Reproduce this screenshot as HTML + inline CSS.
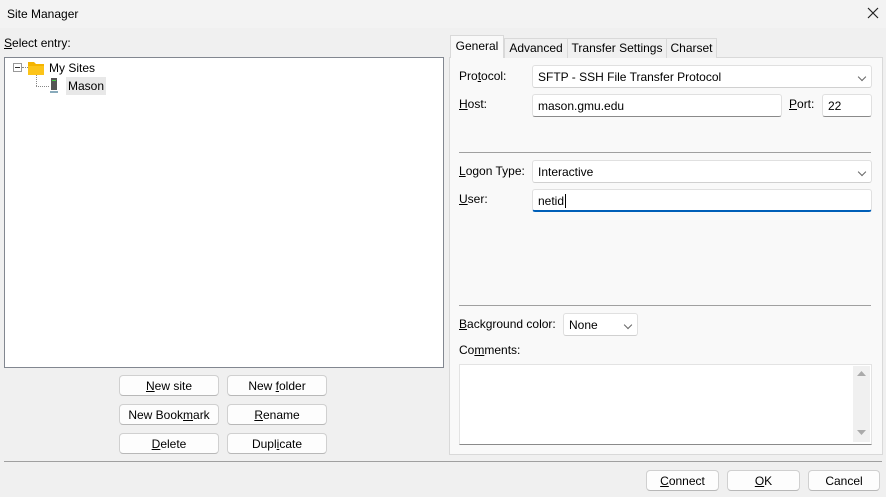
<!DOCTYPE html>
<html><head><style>
*{box-sizing:border-box;margin:0;padding:0}
body{width:886px;height:497px;background:#f0f0f0;font-family:"Liberation Sans",sans-serif;font-size:12px;color:#000;position:relative;overflow:hidden}
.a{position:absolute}
.t{position:absolute;line-height:14px;white-space:nowrap}
.btn{position:absolute;background:#fdfdfd;border:1px solid #d0d0d0;border-bottom-color:#b8b8b8;border-radius:4px;text-align:center;line-height:20px;height:21px}
.inp{position:absolute;background:#fff;border:1px solid #e0e0e0;border-bottom-color:#8a8a8a;border-radius:3px;padding-left:5px;line-height:22px;height:23px}
.chev{position:absolute;right:6px;top:8px;width:6px;height:6px;border-right:1px solid #666;border-bottom:1px solid #666;transform:rotate(45deg)}
u{text-decoration:underline}
.tab{position:absolute;border:1px solid #d9d9d9;border-bottom:none;background:#f0f0f0;text-align:center;line-height:18px}
</style></head><body>
<div class="a" style="left:0;top:0;width:886px;height:28px;background:#f3f3f3"></div>
<div class="t" style="left:7px;top:7px">Site Manager</div>
<svg class="a" style="left:867px;top:7px" width="12" height="12"><path d="M1 1L11 11M11 1L1 11" stroke="#222" stroke-width="1.2"/></svg>

<div class="t" style="left:4px;top:36px"><u>S</u>elect entry:</div>
<div class="a" style="left:4px;top:57px;width:440px;height:311px;background:#fff;border:1px solid #828790"></div>
<div class="a" style="left:13px;top:63px;width:9px;height:9px;border:1px solid #999;background:#fff"></div>
<div class="a" style="left:15px;top:67px;width:5px;height:1px;background:#333"></div>
<div class="a" style="left:22px;top:67px;width:6px;border-top:1px dotted #888"></div>
<div class="a" style="left:36px;top:73px;height:13px;border-left:1px dotted #888"></div>
<div class="a" style="left:36px;top:86px;width:13px;border-top:1px dotted #888"></div>
<svg class="a" style="left:28px;top:61px" width="16" height="14"><path d="M0 1h6l2 2h8v11H0z" fill="#f5b400"/><path d="M0 5h16v9H0z" fill="#fcc419"/></svg>
<div class="t" style="left:49px;top:61px">My Sites</div>
<svg class="a" style="left:50px;top:78px" width="8" height="15"><rect x="1" y="0" width="6" height="12" fill="#555"/><rect x="2" y="2" width="4" height="1" fill="#4c4"/><rect x="0" y="13" width="8" height="2" fill="#8ab"/></svg>
<div class="a" style="left:66px;top:77px;width:40px;height:18px;background:#e8e8e8"></div>
<div class="t" style="left:68px;top:79px">Mason</div>

<div class="btn" style="left:119px;top:375px;width:100px"><u>N</u>ew site</div>
<div class="btn" style="left:227px;top:375px;width:100px">New <u>f</u>older</div>
<div class="btn" style="left:119px;top:404px;width:100px">New Book<u>m</u>ark</div>
<div class="btn" style="left:227px;top:404px;width:100px"><u>R</u>ename</div>
<div class="btn" style="left:119px;top:433px;width:100px"><u>D</u>elete</div>
<div class="btn" style="left:227px;top:433px;width:100px">Dupl<u>i</u>cate</div>

<div class="a" style="left:449px;top:57px;width:434px;height:398px;background:#f9f9f9;border:1px solid #d9d9d9"></div>
<div class="tab" style="left:504px;top:38px;width:64px;height:20px">Advanced</div>
<div class="tab" style="left:567px;top:38px;width:100px;height:20px">Transfer Settings</div>
<div class="tab" style="left:666px;top:38px;width:51px;height:20px">Charset</div>
<div class="tab" style="left:450px;top:35px;width:54px;height:23px;background:#f9f9f9;line-height:20px">General</div>

<div class="t" style="left:459px;top:69px">Pro<u>t</u>ocol:</div>
<div class="inp" style="left:532px;top:65px;width:340px;border-bottom-color:#d0d0d0">SFTP - SSH File Transfer Protocol<div class="chev"></div></div>
<div class="t" style="left:459px;top:97px"><u>H</u>ost:</div>
<div class="inp" style="left:532px;top:94px;width:250px">mason.gmu.edu</div>
<div class="t" style="left:789px;top:97px"><u>P</u>ort:</div>
<div class="inp" style="left:822px;top:94px;width:50px">22</div>
<div class="a" style="left:459px;top:152px;width:412px;height:1px;background:#a0a0a0"></div>
<div class="t" style="left:459px;top:164px"><u>L</u>ogon Type:</div>
<div class="inp" style="left:532px;top:160px;width:340px;border-bottom-color:#d0d0d0">Interactive<div class="chev"></div></div>
<div class="t" style="left:459px;top:192px"><u>U</u>ser:</div>
<div class="inp" style="left:532px;top:189px;width:340px;border-bottom:2px solid #005fb8">netid<span style="border-left:1px solid #000;margin-left:1px"></span></div>
<div class="a" style="left:459px;top:305px;width:412px;height:1px;background:#a0a0a0"></div>
<div class="t" style="left:459px;top:317px"><u>B</u>ackground color:</div>
<div class="inp" style="left:563px;top:313px;width:75px;border-bottom-color:#d0d0d0">None<div class="chev"></div></div>
<div class="t" style="left:459px;top:343px">Co<u>m</u>ments:</div>
<div class="a" style="left:459px;top:364px;width:413px;height:81px;background:#fff;border:1px solid #e3e3e3;border-bottom-color:#8a8a8a"></div>
<div class="a" style="left:853px;top:366px;width:17px;height:76px;background:#f0f0f0"></div>
<svg class="a" style="left:857px;top:370px" width="9" height="66"><path d="M0 6L4.5 1L9 6z" fill="#aaa"/><path d="M0 60L4.5 65L9 60z" fill="#aaa"/></svg>

<div class="a" style="left:4px;top:461px;width:878px;height:1px;background:#a0a0a0"></div>
<div class="btn" style="left:646px;top:470px;width:73px"><u>C</u>onnect</div>
<div class="btn" style="left:727px;top:470px;width:73px"><u>O</u>K</div>
<div class="btn" style="left:808px;top:470px;width:72px">Cancel</div>
</body></html>
